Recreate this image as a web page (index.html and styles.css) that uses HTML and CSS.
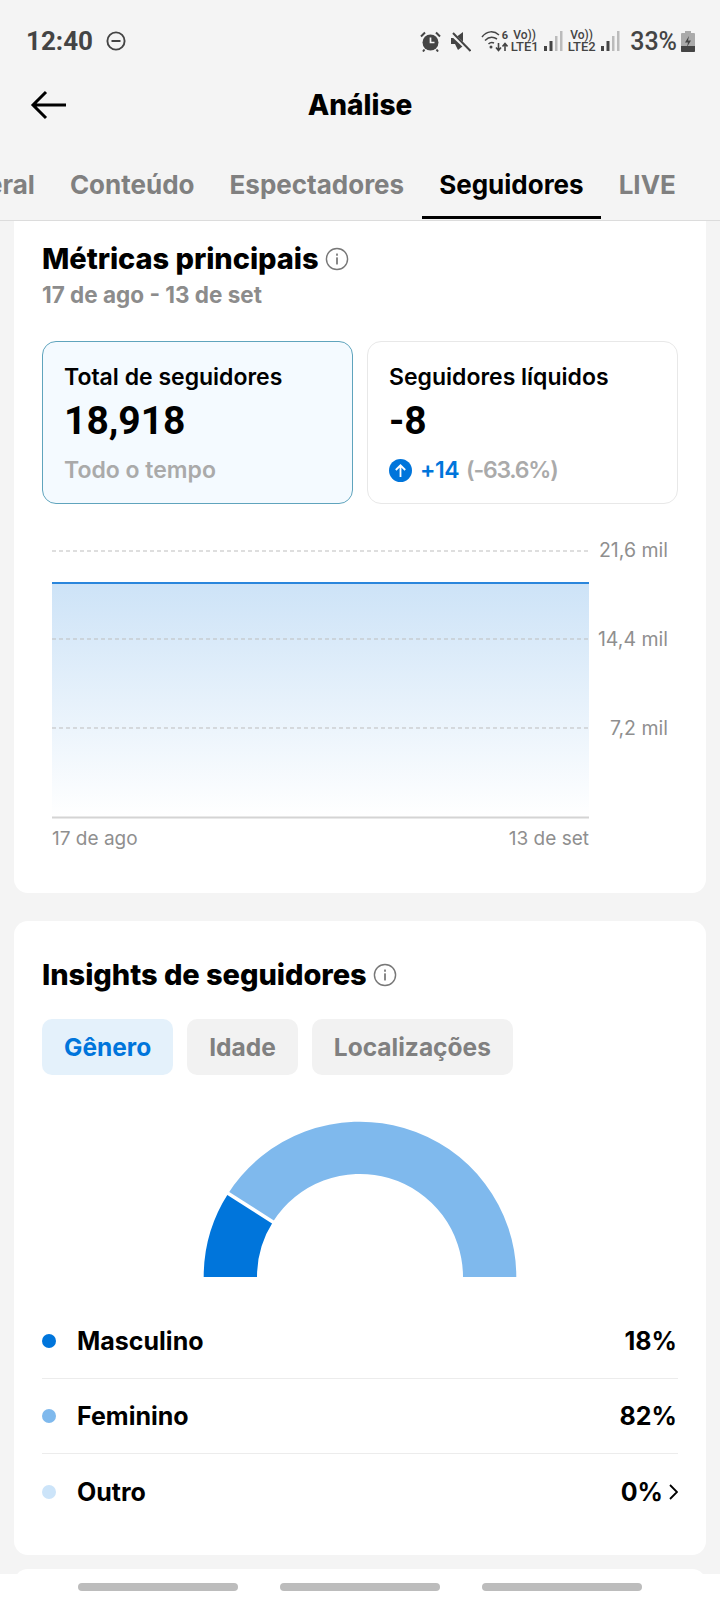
FILE: index.html
```html
<!DOCTYPE html>
<html lang="pt">
<head>
<meta charset="utf-8">
<title>Análise</title>
<link rel="stylesheet" href="styles.css">
</head>
<body>
<div class="phone">
  <header class="top">
    <div class="status">
      <div class="status-left">
        <span class="time">12:40</span>
        <svg class="dnd" width="20" height="20" viewBox="0 0 20 20"><circle cx="10" cy="10" r="8.6" fill="none" stroke="#444" stroke-width="1.9"/><rect x="5.5" y="9" width="9" height="2" fill="#444"/></svg>
      </div>
      <div class="status-right">
        <svg class="ic-alarm" width="21" height="21" viewBox="0 0 21 21"><circle cx="10.5" cy="11.5" r="8" fill="#444"/><path d="M10.500 6.500V11.500H14.500" fill="none" stroke="#f4f4f4" stroke-width="1.700"/><path d="M1 5.500L5 1.500M20 5.500L16 1.500M4.500 18.500L3 20.500M16.500 18.500L18 20.500" stroke="#444" stroke-width="2" fill="none"/></svg>
        <svg class="ic-mute" width="21" height="21" viewBox="0 0 21 21"><path d="M1 7H5L13 1V15L8 19L5 13H1Z" fill="#444"/><path d="M2 3L20 20" stroke="#f4f4f4" stroke-width="4"/><path d="M3 2L20.500 20" stroke="#444" stroke-width="2"/></svg>
        <div class="wifi">
          <svg width="27" height="21" viewBox="0 0 27 21"><path d="M1 6C6-.5 13-.5 18 4M4 9.500C8 5.500 12 5.500 16 8M7.500 13C9.500 11 11 11 13 12" fill="none" stroke="#444" stroke-width="1.500"/><circle cx="10" cy="16" r="1.500" fill="#444"/><path d="M17.500 12V19M15 16.500L17.500 19.500L20 16.500M24 20V13M21.500 15.500L24 12.500L26.500 15.500" fill="none" stroke="#444" stroke-width="1.600"/></svg>
          <span class="wifi-six">6</span>
        </div>
        <div class="sim"><span class="vo">Vo))</span><span class="lte">LTE1</span></div>
        <svg class="bars" width="19" height="20" viewBox="0 0 19 20"><rect x="0" y="15" width="3" height="5" fill="#444"/><rect x="5.500" y="10" width="3" height="10" fill="#444"/><rect x="11" y="5" width="2.500" height="15" fill="#bbb"/><rect x="16" y="0" width="2.500" height="20" fill="#bbb"/></svg>
        <div class="sim"><span class="vo">Vo))</span><span class="lte">LTE2</span></div>
        <svg class="bars" width="19" height="20" viewBox="0 0 19 20"><rect x="0" y="15" width="3" height="5" fill="#444"/><rect x="5.500" y="10" width="3" height="10" fill="#444"/><rect x="11" y="5" width="2.500" height="15" fill="#bbb"/><rect x="16" y="0" width="2.500" height="20" fill="#bbb"/></svg>
        <span class="batt-text">33%</span>
        <svg class="batt" width="14" height="21" viewBox="0 0 14 21"><path d="M4 0H10V2H13A1 1 0 0 1 14 3V20A1 1 0 0 1 13 21H1A1 1 0 0 1 0 20V3A1 1 0 0 1 1 2H4Z" fill="#aaa"/><path d="M0 15H14V20A1 1 0 0 1 13 21H1A1 1 0 0 1 0 20Z" fill="#444"/><path d="M8 5L4 11.500H7L6 16L10 9.500H7Z" fill="#444"/></svg>
      </div>
    </div>
    <div class="appbar">
      <svg class="back" width="38" height="30" viewBox="0 0 38 30"><path d="M36 15H3M16 2L3 15L16 28" fill="none" stroke="#000" stroke-width="3"/></svg>
      <h1 class="app-title">Análise</h1>
    </div>
    <nav class="tabs">
      <div class="tab-track">
        <span class="tab">Geral</span>
        <span class="tab">Conteúdo</span>
        <span class="tab">Espectadores</span>
        <span class="tab tab-on">Seguidores</span>
        <span class="tab">LIVE</span>
      </div>
    </nav>
  </header>

  <main class="scroll">
    <section class="card card-metrics">
      <div class="head">
        <h2 class="card-title">Métricas principais</h2>
        <svg class="info" width="24" height="24" viewBox="0 0 22 22"><circle cx="11" cy="11" r="9.700" fill="none" stroke="#777" stroke-width="1.300"/><rect x="10.200" y="9.500" width="1.600" height="6.500" fill="#777"/><rect x="10.200" y="6" width="1.600" height="2" fill="#777"/></svg>
      </div>
      <p class="range">17 de ago - 13 de set</p>
      <div class="stats">
        <div class="stat stat-on">
          <div class="stat-label">Total de seguidores</div>
          <div class="stat-value">18,918</div>
          <div class="stat-sub">Todo o tempo</div>
        </div>
        <div class="stat">
          <div class="stat-label">Seguidores líquidos</div>
          <div class="stat-value">-8</div>
          <div class="stat-sub">
            <svg class="up" width="23" height="23" viewBox="0 0 23 23"><circle cx="11.500" cy="11.500" r="11.500" fill="#0075db"/><path d="M11.500 18V6.500M6.800 11L11.500 6.300L16.200 11" fill="none" stroke="#fff" stroke-width="1.800"/></svg>
            <span class="delta">+14</span><span class="pct">(-63.6%)</span>
          </div>
        </div>
      </div>
      <svg class="chart" width="664" height="330" viewBox="0 0 664 330">
        <defs>
          <linearGradient id="area" x1="0" y1="0" x2="0" y2="1">
            <stop offset="0" stop-color="#cde3f7"/>
            <stop offset="1" stop-color="#ffffff"/>
          </linearGradient>
        </defs>
        <rect x="10" y="49" width="537" height="234" fill="url(#area)"/>
        <line x1="10" x2="547" y1="49" y2="49" stroke="#2a86dc" stroke-width="2"/>
        <g class="grid-lines">
          <line x1="10" x2="547" y1="17" y2="17"/>
          <line x1="10" x2="547" y1="105" y2="105"/>
          <line x1="10" x2="547" y1="194" y2="194"/>
        </g>
        <line x1="10" x2="547" y1="283.500" y2="283.500" stroke="#d4d4d4" stroke-width="2"/>
        <g class="chart-text">
          <text x="626" y="23" text-anchor="end">21,6 mil</text>
          <text x="626" y="112" text-anchor="end">14,4 mil</text>
          <text x="626" y="201" text-anchor="end">7,2 mil</text>
          <text class="axis" x="10" y="311">17 de ago</text>
          <text class="axis" x="547" y="311" text-anchor="end">13 de set</text>
        </g>
      </svg>
    </section>

    <section class="card card-insights">
      <div class="head">
        <h2 class="card-title">Insights de seguidores</h2>
        <svg class="info" width="24" height="24" viewBox="0 0 22 22"><circle cx="11" cy="11" r="9.700" fill="none" stroke="#777" stroke-width="1.300"/><rect x="10.200" y="9.500" width="1.600" height="6.500" fill="#777"/><rect x="10.200" y="6" width="1.600" height="2" fill="#777"/></svg>
      </div>
      <div class="chips">
        <span class="chip chip-on">Gênero</span>
        <span class="chip">Idade</span>
        <span class="chip">Localizações</span>
      </div>
      <svg class="gauge" width="320" height="160" viewBox="0 0 320 160">
        <path d="M3.700 157A156.300 155 0 0 1 28.200 73.400L73 101.800A103 103 0 0 0 57 157Z" fill="#0075db"/>
        <path d="M28.200 73.400A156.300 155 0 0 1 316.300 157H263A103 103 0 0 0 73 101.800Z" fill="#7fb9ed"/>
        <line x1="22" y1="69.500" x2="80" y2="106.500" stroke="#fff" stroke-width="3.500"/>
      </svg>
      <ul class="legend">
        <li class="row"><i class="dot dot-a"></i><span class="row-name">Masculino</span><span class="row-val">18%</span></li>
        <li class="row"><i class="dot dot-b"></i><span class="row-name">Feminino</span><span class="row-val">82%</span></li>
        <li class="row"><i class="dot dot-c"></i><span class="row-name">Outro</span><span class="row-val">0%</span><svg class="chev" width="9" height="16" viewBox="0 0 9 16"><path d="M1 1L8 8L1 15" fill="none" stroke="#000" stroke-width="1.800"/></svg></li>
      </ul>
    </section>

    <section class="card card-next"></section>
  </main>

  <footer class="navbar">
    <span class="handle"></span>
    <span class="handle"></span>
    <span class="handle"></span>
  </footer>
</div>
</body>
</html>
```

FILE: styles.css
```css
* { box-sizing: border-box; }
html, body { margin: 0; padding: 0; }
body { background: #f4f4f4; font-family: Inter, "Liberation Sans", sans-serif; color: #000; }
h1, h2, p, ul { margin: 0; padding: 0; }
ul { list-style: none; }

.phone { width: 720px; height: 1600px; display: flex; flex-direction: column; overflow: hidden; background: #f4f4f4; }

.top { height: 221px; flex: none; border-bottom: 1px solid #dcdcdc; }

.status { height: 82px; display: flex; align-items: center; justify-content: space-between; padding: 0 25px 0 26px; color: #444; font-family: Roboto, sans-serif; }
.status-left { display: flex; align-items: center; gap: 13px; }
.time { font-size: 26px; font-weight: 700; }
.status-right { display: flex; align-items: center; }
.ic-alarm { margin-right: 9px; }
.ic-mute { margin-right: 10px; }
.wifi { position: relative; width: 27px; height: 21px; margin-right: 3px; }
.wifi-six { position: absolute; right: 0; top: -1px; font-size: 11px; font-weight: 700; line-height: 11px; }
.sim { display: flex; flex-direction: column; align-items: center; width: 27px; line-height: 11px; font-weight: 500; }
.vo { font-size: 12px; }
.lte { font-size: 13px; }
.bars { margin: 0 5px 0 6px; }
.batt-text { font-size: 25px; font-weight: 500; margin: 0 4px 0 5px; }

.appbar { height: 46px; display: flex; align-items: center; justify-content: center; position: relative; }
.back { position: absolute; left: 30px; top: 8px; }
.app-title { font-size: 28px; font-weight: 800; line-height: 46px; }

.tabs { height: 92px; overflow: hidden; position: relative; }
.tab-track { display: flex; height: 92px; margin-left: -50px; }
.tab { height: 88px; padding: 39px 17.5px 0; font-size: 26px; line-height: 36px; font-weight: 700; color: #808080; white-space: nowrap; flex: none; }
.tab-on { color: #000; border-bottom: 3px solid #000; height: 91px; }

.scroll { flex: 1; min-height: 0; overflow: hidden; padding: 0 14px; }
.card { background: #fff; border-radius: 14px; padding: 0 28px; }
.card-metrics { height: 672px; border-radius: 0 0 14px 14px; padding-top: 20px; }
.card-insights { height: 634px; margin-top: 28px; padding-top: 36px; }
.card-next { height: 60px; margin-top: 14px; }

.head { display: flex; align-items: center; gap: 6px; height: 36px; }
.card-title { font-size: 29px; font-weight: 800; line-height: 36px; letter-spacing: -.05px; }
.info { flex: none; }
.range { font-size: 22.5px; font-weight: 700; color: #8c8c8c; line-height: 32px; margin-top: 2px; }

.stats { display: flex; gap: 14px; margin-top: 30px; }
.stat { flex: 1; height: 163px; border: 1px solid #e8e8e8; border-radius: 14px; padding: 21px 21px 0; }
.stat-on { background: #f4faff; border-color: #5fa4bd; }
.stat-label { font-size: 23px; font-weight: 600; line-height: 28px; }
.stat-value { font-family: Roboto, Inter, sans-serif; font-size: 39px; font-weight: 700; line-height: 46px; margin-top: 7px; }
.stat-sub { display: flex; align-items: center; gap: 7px; font-size: 23px; font-weight: 600; color: #aaaaaa; line-height: 28px; margin-top: 12px; }
.up { flex: none; }
.delta { color: #0075db; margin-left: 1px; letter-spacing: -.5px; }
.pct { letter-spacing: -1.2px; }

.chart { display: block; margin: 30px 0 0 0; }
.grid-lines line { stroke: #bdbdbd; stroke-width: 1; stroke-dasharray: 4 3; }
.chart-text text { font-family: Inter, "Liberation Sans", sans-serif; font-size: 19.5px; fill: #8f8f8f; }
.chart-text .axis { font-size: 19px; }

.chips { display: flex; gap: 14px; margin-top: 26px; }
.chip { height: 56px; padding: 0 22px; line-height: 56px; border-radius: 10px; background: #f2f2f2; color: #808080; font-size: 24.5px; font-weight: 700; }
.chip-on { background: #e4f1fb; color: #0075db; }

.gauge { display: block; margin: 45px auto 0; }

.legend { margin-top: 24px; }
.row { height: 75px; display: flex; align-items: center; border-bottom: 1px solid #ececec; font-size: 25px; font-weight: 700; }
.row:last-child { border-bottom: 0; }
.dot { width: 14px; height: 14px; border-radius: 50%; margin-right: 21px; flex: none; }
.dot-a { background: #0075db; }
.dot-b { background: #7fb9ed; }
.dot-c { background: #cce4f9; }
.row-name { flex: 1; }
.row-val { margin-right: 1px; }
.chev { margin-left: 5px; flex: none; }

.navbar { height: 26px; flex: none; background: #fff; display: flex; justify-content: center; gap: 42px; padding-top: 9px; margin-top: -26px; position: relative; }
.handle { width: 160px; height: 8px; border-radius: 4px; background: #bcbcbc; }
```
